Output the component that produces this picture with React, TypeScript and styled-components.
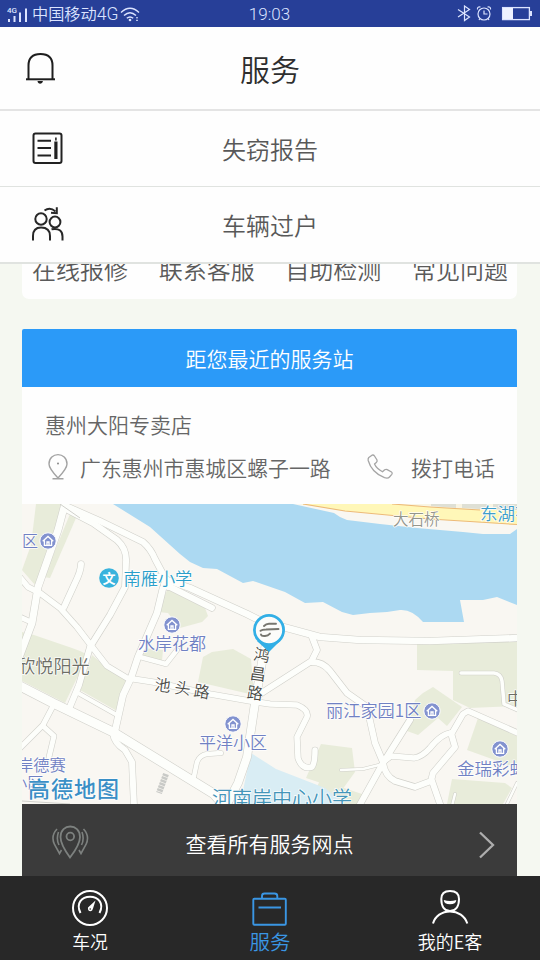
import React from "react";
import styled, { createGlobalStyle } from "styled-components";

const GlobalStyle = createGlobalStyle`
  * { box-sizing: border-box; }
  body {
    margin: 0;
    background: #f5f8f1;
    font-family: "Noto Sans CJK SC", sans-serif;
    font-weight: 350;
    color: #5a5a5a;
  }
  svg { display: block; flex: none; }
`;

const Screen = styled.div`
  width: 540px;
  height: 960px;
  display: flex;
  flex-direction: column;
  overflow: hidden;
  background: #f5f8f1;
`;

const StatusBar = styled.div`
  height: 27px;
  flex: none;
  display: grid;
  grid-template-columns: 1fr auto 1fr;
  align-items: center;
  padding: 0 8px 0 7px;
  background: #273f98;
  color: #dce4ff;
`;

const StatusGroup = styled.div<{ $end?: boolean }>`
  display: flex;
  align-items: center;
  gap: 2px;
  justify-content: ${(p) => (p.$end ? "flex-end" : "flex-start")};
`;

const StatusText = styled.span<{ $latin?: boolean }>`
  font-family: ${(p) => (p.$latin ? "Roboto, " : "")}"Noto Sans CJK SC", sans-serif;
  font-size: ${(p) => (p.$latin ? 17 : 16.2)}px;
  line-height: 27px;
  white-space: nowrap;
`;

const Latin = styled.span`
  font-family: Roboto, sans-serif;
  font-size: 17.5px;
`;

const Header = styled.header`
  height: 84px;
  flex: none;
  display: grid;
  grid-template-columns: 80px 1fr 80px;
  align-items: center;
  padding-bottom: 1px;
  background: #fefefe;
  border-bottom: 2px solid #e4e4e4;
`;

const BellSlot = styled.div`
  padding-left: 25px;
`;

const Title = styled.h1`
  margin: 0;
  font-size: 30px;
  font-weight: 350;
  line-height: 40px;
  text-align: center;
  color: #2e2e2e;
`;

const MenuRow = styled.div<{ $last?: boolean }>`
  height: ${(p) => (p.$last ? 77 : 76)}px;
  flex: none;
  display: grid;
  grid-template-columns: 80px 1fr 80px;
  align-items: center;
  background: #fefefe;
  border-bottom: ${(p) => (p.$last ? 2 : 1)}px solid #e0e3e0;
`;

const MenuIcon = styled.div`
  padding: 0 0 1px 30px;
`;

const MenuLabel = styled.div`
  font-size: 24px;
  line-height: 32px;
  text-align: center;
  color: #585858;
`;

const Content = styled.main`
  flex: 1;
  min-height: 0;
  padding: 0 23px 0 22px;
  display: flex;
  flex-direction: column;
`;

const QuickCard = styled.div`
  height: 35px;
  flex: none;
  display: flex;
  justify-content: space-between;
  align-items: flex-end;
  padding: 0 9px 12px 10px;
  margin-bottom: 30px;
  overflow: hidden;
  border-radius: 0 0 7px 7px;
  background: #fefefe;
`;

const QuickLabel = styled.span`
  font-size: 24px;
  line-height: 36px;
  white-space: nowrap;
`;

const StationHead = styled.div`
  height: 58px;
  flex: none;
  border-radius: 2px 2px 0 0;
  background: #2b9af8;
  color: #fff;
  font-size: 21px;
  line-height: 58px;
  text-align: center;
`;

const StationInfo = styled.div`
  height: 117px;
  flex: none;
  padding: 21px 22px 0 23px;
  background: #fefefe;
  font-size: 21px;
  line-height: 32px;
  color: #666;
`;

const ContactRow = styled.div`
  display: flex;
  align-items: center;
  margin-top: 11px;
`;

const Address = styled.span`
  flex: 1;
  padding-left: 9px;
  font-size: 20.9px;
  white-space: nowrap;
`;

const Call = styled.span`
  padding-left: 17px;
  white-space: nowrap;
`;

const AllStations = styled.div`
  flex: 1;
  display: grid;
  grid-template-columns: 80px 1fr 80px;
  align-items: center;
  justify-items: center;
  padding-top: 6px;
  background: #3b3b3b;
  color: #fff;
  font-size: 21px;
`;

const PinSlot = styled.div`
  justify-self: start;
  padding-left: 29px;
`;

const ChevronSlot = styled.div`
  justify-self: end;
  padding: 3px 21px 0 0;
`;

const TabBar = styled.nav`
  height: 84px;
  flex: none;
  display: grid;
  grid-template-columns: repeat(3, 180px);
  background: #282828;
`;

const Tab = styled.div<{ $active?: boolean }>`
  display: flex;
  flex-direction: column;
  align-items: center;
  padding-top: 13px;
  color: ${(p) => (p.$active ? "#3a96e4" : "#fff")};
`;

const TabLabel = styled.span<{ $size: number }>`
  font-size: ${(p) => p.$size}px;
  line-height: 26px;
  margin-top: 1px;
`;

const ROADS: { d: string; w: number }[] = [
  { d: "M312 637 L317 650 L311 662", w: 6 },
  { d: "M66 500 L58 530 L38 587 L32 623 L20 655", w: 7 },
  { d: "M66 506 L100 521 L143 542 Q151 549 155 559 L163 574 L168 587", w: 6 },
  { d: "M66 509 L93 523 L117 540 Q127 549 126 562 L125 587 L110 615 L90 647 L79 685 L69 709", w: 6 },
  { d: "M150 574 L190 588 L247 614 L263 622 L287 628 L320 637 L360 640 L430 641 L520 638", w: 6.5 },
  { d: "M164 584 L190 597 L212 608", w: 6 },
  { d: "M18 575 L28 587 L40 593 L60 608 L77 627 L93 648 L107 666 L127 678 L153 682 L210 694 L250 701 L270 704 L297 705 Q309 710 307 717 L297 737 L298 758 Q302 770 312 767 Q315 763 315 750", w: 5.5 },
  { d: "M81 564 Q81 571 75 583 L64 607", w: 6 },
  { d: "M163 588 L157 613 L138 657 L131 678 L123 695 L115 731", w: 6.5 },
  { d: "M140 657 L166 664 L177 650", w: 4.5 },
  { d: "M20 617 L31 622", w: 5 },
  { d: "M18 685 L53 703 L113 732 L170 767 L214 794 L226 808", w: 9 },
  { d: "M78 693 L117 715", w: 4 },
  { d: "M53 706 L43 725 L20 748", w: 5 },
  { d: "M43 726 L54 736 L49 757", w: 5 },
  { d: "M113 733 Q114 743 125 750 L132 762 L134 806", w: 6 },
  { d: "M267 640 L262 662 L255 703 L247 757 L238 783 L226 806", w: 8 },
  { d: "M193 781 L197 762 Q200 755 207 754 L221 753", w: 4.5 },
  { d: "M257 696 L310 662 Q322 661 330 671 L347 693 L367 707 L371 725 L375 743 L383 762", w: 6 },
  { d: "M410 720 L383 763 L358 808", w: 6 },
  { d: "M383 762 L391 756 L414 758 Q422 757 430 748 Q442 733 452 733 L463 714 L468 711 L520 734", w: 5.5 },
  { d: "M451 733 L455 747 L433 773 L431 781 L415 787 L395 781 Q385 776 383 763", w: 6 },
  { d: "M432 781 L440 804", w: 6 },
  { d: "M383 764 L363 769 L341 770", w: 2.5 },
  { d: "M461 673 L494 673 Q501 674 502 681 L504 704 L520 711", w: 3.5 },
  { d: "M517 783 L506 806", w: 2.5 },
  { d: "M455 794 L452 806", w: 2.5 },
];

const GREENS = [
  "36,504 62,504 46,562 35,585 22,570 31,545",
  "70,514 76,518 50,578 44,577",
  "168,588 205,608 208,616 202,622 180,628 168,613 158,612",
  "22,632 34,635 72,648 80,651 88,655 65,703 22,681",
  "92,655 107,668 129,681 117,711 80,690",
  "142,648 163,650 162,661 140,656",
  "203,657 212,652 233,649 251,659 254,695 198,682",
  "417,642 517,640 517,706 470,708 453,700 453,671 417,670",
  "423,693 433,687 462,707 447,726 438,718 418,735 407,731 415,700",
  "478,718 517,736 517,768 467,750",
  "321,744 352,748 355,772 342,790 306,778",
  "452,779 505,783 512,788 503,804 447,804",
  "320,780 362,794 359,804 310,804",
];

const MapHouse = ({ x, y }: { x: number; y: number }) => (
  <g transform={`translate(${x} ${y})`}>
    <circle r="8.2" fill="#8292cf" stroke="#fff" strokeWidth="1" />
    <path d="M-5.3 .3 L0 -4.6 L5.3 .3 M-3.6 -.6 V4.3 H3.6 V-.6 M-1 4.3 V1 H1 V4.3" fill="none" stroke="#fff" strokeWidth="1.3" />
  </g>
);

const MapText = styled.text<{ $tone: string; $weight?: number }>`
  font-family: "Noto Sans CJK SC", sans-serif;
  font-weight: ${(p) => p.$weight ?? 350};
  fill: ${(p) => p.$tone};
  stroke: #fffd;
  stroke-width: 1.6px;
  stroke-linejoin: round;
  paint-order: stroke;
`;

const BLUE = "#7081c3";

const StationMap = () => (
  <svg width="495" height="300" viewBox="22 504 495 300">
    <rect x="22" y="504" width="495" height="300" fill="#f9f7f2" />
    {GREENS.map((p) => (
      <polygon key={p} points={p} fill="#e8ecda" />
    ))}
    <path d="M113 504 L150 527 L180 554 L190 562 L203 568 L217 569 L243 583 L253 581 L285 592 L305 603 L323 602 L342 612 L353 615 L370 613 L387 612 L400 610 Q412 609 423 622 L464 622 L460 600 L483 600 L497 597 L517 605 V529 L510 534 L483 534 L463 532 L417 528 L380 524 L347 520 L340 517 L334 513 L293 504 Z" fill="#acd9f2" />
    <path d="M300 504 H517 V525 L430 519 L345 511 Z" fill="#fff7b8" />
    <path d="M395 504 L430 507 L517 511 V504 Z" fill="#f9f5e4" />
    <path d="M431 504 H456 V508 L431 506 Z M462 504 H487 V509.5 L462 508 Z M493 504 H517 V510 L493 509.5 Z" fill="#dfe0d5" />
    <path d="M303 504 L345 511 L430 519 L517 524.5 M392 504 L430 507 L480 510" fill="none" stroke="#edba79" strokeWidth="1.1" />
    <path d="M251 753 L276 769 L325 788 L345 804 H240 Z" fill="#d9edf4" />
    <g fill="none" strokeLinecap="round" strokeLinejoin="round">
      {ROADS.map((r) => (
        <path key={r.d} d={r.d} stroke="#d0d0ca" strokeWidth={r.w + 1.1} />
      ))}
      {ROADS.map((r) => (
        <path key={r.d} d={r.d} stroke="#fdfefb" strokeWidth={r.w} />
      ))}
    </g>
    <path d="M22 801 L70 804 M60 504 L80 518" stroke="#d0d0cb" fill="none" />
    <path d="M166 774 L159 793" stroke="#c9cac7" strokeWidth="6" strokeDasharray="2.5 .7" />

    <MapText $tone="#94968c" x="393" y="525" fontSize="15.5">大石桥</MapText>
    <MapText $tone="#3e9ecb" x="480" y="520" fontSize="17.5">东湖花园</MapText>
    <MapText $tone={BLUE} x="22" y="547" fontSize="16">区</MapText>
    <MapHouse x={48} y={541} />
    <circle cx="109" cy="578" r="9.8" fill="#39b3dd" />
    <text x="109" y="583" textAnchor="middle" fontSize="13" fontWeight="700" fill="#fff">文</text>
    <MapText $tone="#2a9fca" x="123.5" y="585" fontSize="17.2">南雁小学</MapText>
    <MapHouse x={172} y={625} />
    <MapText $tone={BLUE} x="138" y="650" fontSize="17">水岸花都</MapText>
    <MapText $tone="#6d6e66" x="17" y="673" fontSize="18.2">欣悦阳光</MapText>
    <g>
      <MapText $tone="#4a4b45" x="154" y="690" fontSize="16" transform="rotate(7 154 689)">池</MapText>
      <MapText $tone="#4a4b45" x="174" y="693" fontSize="16" transform="rotate(7 174 692)">头</MapText>
      <MapText $tone="#4a4b45" x="193" y="696" fontSize="16" transform="rotate(9 193 696)">路</MapText>
      <MapText $tone="#4a4b45" x="254" y="661" fontSize="16" transform="rotate(10 262 655)">鸿</MapText>
      <MapText $tone="#4a4b45" x="250" y="680" fontSize="16" transform="rotate(8 259 674)">昌</MapText>
      <MapText $tone="#4a4b45" x="247" y="699" fontSize="16" transform="rotate(8 255 693)">路</MapText>
    </g>
    <MapHouse x={233} y={724} />
    <MapText $tone={BLUE} x="199" y="749" fontSize="17">平洋小区</MapText>
    <MapText $tone={BLUE} x="326" y="717" fontSize="17.2">丽江家园1区</MapText>
    <MapHouse x={432} y={711} />
    <MapText $tone="#6d6e66" x="507" y="705" fontSize="17">中</MapText>
    <MapHouse x={500} y={749} />
    <MapText $tone={BLUE} x="457" y="775" fontSize="17.5">金瑞彩虹</MapText>
    <MapText $tone={BLUE} x="17" y="771" fontSize="16.3">岸德赛</MapText>
    <MapText $tone={BLUE} x="11" y="789" fontSize="16.3">小区</MapText>
    <MapText $tone="#4495b9" x="212" y="806" fontSize="20">河南岸中心小学</MapText>
    <MapText $tone="#3a8fc6" $weight={500} x="28" y="797" fontSize="22" textLength="91">高德地图</MapText>

    <path d="M257 641 L269 652 L280 641 Z" fill="#32afe6" />
    <circle cx="269" cy="630" r="14.6" fill="#fcfcfa" stroke="#32afe6" strokeWidth="2.8" />
    <path d="M264 626 Q266 623.8 269 623.8 H276 M260.5 630.8 Q262 629.5 266 629.5 L278.5 629 M261 634.5 Q261.5 636.3 265 636 Q268 635.8 270 633.6" fill="none" stroke="#77766f" strokeWidth="1.9" strokeLinecap="round" />
  </svg>
);

const SignalIcon = () => (
  <svg width="23" height="19" viewBox="0 0 23 19" fill="#dce4ff">
    <text x="0" y="8" fontSize="8" fontFamily="Roboto, sans-serif" fontWeight="500">4G</text>
    <path d="M1 14h2v3H1z M6.5 11h2v6h-2z M12 7.5h2V17h-2z M18 3.5h2V17h-2z" />
  </svg>
);

const WifiIcon = () => (
  <svg width="20" height="17" viewBox="0 0 20 17" fill="none" stroke="#dce4ff" strokeWidth="1.4">
    <path d="M1 6.5 Q10 -2 19 6.5 M4 9.5 Q10 3.8 16 9.5 M6.8 12.3 Q10 9.5 13.2 12.3" />
    <circle cx="10" cy="14" r="1.3" fill="#dce4ff" stroke="none" />
    <path d="M16 11.8h2M16 14.3h2" strokeWidth="1" />
  </svg>
);

const StatusIcons = () => (
  <svg width="76" height="18" viewBox="456 5 76 18" fill="none" stroke="#dce4ff" strokeWidth="1.2">
    <path d="M458 9.5 L469.5 17 L464.5 20.5 V6 L469.5 9.5 L458 17" />
    <circle cx="484" cy="14" r="6" />
    <path d="M484 10.5 V14 H487.5 M477.5 9.5 Q477 6.5 480.5 7 M490.5 9.5 Q491 6.5 487.5 7 M480 18.5 L479 20 M488 18.5 L489 20" />
    <rect x="502.6" y="7.6" width="26.8" height="12" strokeWidth="1.3" />
    <path d="M503 8h10v11h-10z" fill="#eef2ff" stroke="none" />
    <path d="M530 11h2v5h-2z" fill="#dce4ff" stroke="none" />
  </svg>
);

const BellIcon = () => (
  <svg width="31" height="34" viewBox="25 51 31 34" fill="none" stroke="#1e1e1e" strokeWidth="2">
    <path d="M28.5 79 V65.5 C28.5 57.5 33.5 54 40.5 54 S52.5 57.5 52.5 65.5 V79" />
    <path d="M26 79.3 H55" />
    <path d="M37.5 81 H43 Q42.5 83.8 40.2 83.8 T37.5 81Z" fill="#1e1e1e" stroke="none" />
  </svg>
);

const ReportIcon = () => (
  <svg width="34" height="34" viewBox="30 131 34 34" fill="none" stroke="#222" strokeWidth="2">
    <rect x="33.5" y="133.5" width="28" height="29.5" rx="2" />
    <path d="M37.5 140.8 H51 M37.5 148 H51 M37.5 155.5 H51" />
    <path d="M55.9 141.5 V159" strokeWidth="3.2" />
    <path d="M55.9 137.5 V140.5" strokeWidth="1.6" />
  </svg>
);

const TransferIcon = () => (
  <svg width="36" height="36" viewBox="30 206 36 36" fill="none" stroke="#272727" strokeWidth="2">
    <circle cx="41" cy="219" r="5.7" />
    <circle cx="55" cy="222" r="5.4" />
    <path d="M33 240.5 V236 C33 230 36 227.5 41 227.5 S50 230 50 236 V240.5 M51.5 229.3 C59 227.8 62.5 231 62.5 236.5 V240.5" />
    <path d="M44.5 210.5 Q50 206.5 55.5 211.5" />
    <path d="M56.8 207.2 V213.2 L51 212.7" />
  </svg>
);

const AddressPin = () => (
  <svg width="26" height="28" viewBox="45 453 26 28" fill="none" stroke="#a3a3a3" strokeWidth="1.4">
    <path d="M58 478 Q49 468.5 49 464 C49 451.5 67 451.5 67 464 Q67 468.5 58 478Z M52.5 478.7 H63.5" />
    <circle cx="58" cy="463.5" r="1" fill="#888" stroke="none" />
  </svg>
);

const PhoneIcon = () => (
  <svg width="28" height="28" viewBox="366 453 28 28" fill="none" stroke="#a5a5a5" strokeWidth="1.3" strokeLinejoin="round">
    <path d="M368.8 457.5 L372 455.2 Q373.5 454.5 374.5 456 L377 460 Q377.5 461.5 376.3 462.5 L374.5 464 Q376.5 468.5 382.5 471.8 L384.7 469.8 Q386 469 387.2 469.6 L391.5 472 Q392.8 473 391.8 474.3 L389.5 477 Q388 478.8 384.5 477.7 Q371.5 472.5 368.2 460.5 Q367.8 458.5 368.8 457.5Z" />
  </svg>
);

const StationsIcon = () => (
  <svg width="38" height="38" viewBox="51 825 38 38" fill="none" stroke="#7d817f" strokeWidth="1.8">
    <path d="M70 858.5 Q60.5 845.5 60.5 838 C60.5 824 80 824 80 838 Q80 845.5 70 858.5Z" />
    <circle cx="70.3" cy="837.5" r="3.8" />
    <path d="M57 830 Q50.5 837 54.5 845.5 L59.5 854.5 L61.5 851 M58.5 833 Q56 840 59 846 M83.5 830 Q90 837 86 845.5 L81 854.5 L79 851 M82 833 Q84.5 840 81.5 846" strokeWidth="1.6" />
  </svg>
);

const Chevron = () => (
  <svg width="18" height="30" viewBox="0 0 18 30" fill="none" stroke="#adadad" strokeWidth="2.3">
    <path d="M2 2.5 L15 15 L2 27.5" />
  </svg>
);

const GaugeIcon = () => (
  <svg width="38" height="38" viewBox="0 0 38 38" fill="none" stroke="#fff" strokeWidth="2">
    <circle cx="19" cy="19" r="17" />
    <path d="M9.5 24 C4.5 14 11 7.8 19 7.8 S33.5 14 28.5 24" />
    <path d="M24.5 11.5 L17 18.5 Q16.5 22 19.5 22.3 Q21.5 22 22 19.5Z" fill="#fff" stroke="none" />
    <circle cx="19.2" cy="20" r=".8" fill="#282828" stroke="none" />
  </svg>
);

const CaseIcon = () => (
  <svg width="38" height="38" viewBox="0 0 38 38" fill="none" stroke="#3a96e4" strokeWidth="1.9">
    <rect x="2.3" y="9.8" width="32.5" height="26" rx="1" />
    <path d="M11 9.5 V7 Q11 4.5 13.5 4.5 H23.5 Q26.3 4.5 26.3 7 V9.5 M7.5 18.5 H30" />
  </svg>
);

const RiderIcon = () => (
  <svg width="38" height="38" viewBox="0 0 38 38" fill="none" stroke="#fff" strokeWidth="2">
    <path d="M10.3 10 C10.3 4.3 14 2 19 2 S28 4.3 28 10 C28 17.5 24.5 22 19 22 S10.3 17.5 10.3 10Z" />
    <path d="M12.8 11 Q19 12.8 25.3 11 Q25 15.3 19 15.3 T12.8 11Z" fill="#fff" stroke="none" />
    <path d="M2 34.5 C4 27 11 22.4 19 22.4 S34 27 36.3 34.5" />
  </svg>
);

const QUICK_ACTIONS = ["在线报修", "联系客服", "自助检测", "常见问题"];

export default function App() {
  return (
    <Screen>
      <GlobalStyle />
      <StatusBar>
        <StatusGroup>
          <SignalIcon />
          <StatusText>中国移动<Latin>4G</Latin></StatusText>
          <WifiIcon />
        </StatusGroup>
        <StatusText $latin>19:03</StatusText>
        <StatusGroup $end>
          <StatusIcons />
        </StatusGroup>
      </StatusBar>

      <Header>
        <BellSlot><BellIcon /></BellSlot>
        <Title>服务</Title>
      </Header>
      <MenuRow>
        <MenuIcon><ReportIcon /></MenuIcon>
        <MenuLabel>失窃报告</MenuLabel>
      </MenuRow>
      <MenuRow $last>
        <MenuIcon><TransferIcon /></MenuIcon>
        <MenuLabel>车辆过户</MenuLabel>
      </MenuRow>

      <Content>
        <QuickCard>
          {QUICK_ACTIONS.map((label) => (
            <QuickLabel key={label}>{label}</QuickLabel>
          ))}
        </QuickCard>
        <StationHead>距您最近的服务站</StationHead>
        <StationInfo>
          <div>惠州大阳专卖店</div>
          <ContactRow>
            <AddressPin />
            <Address>广东惠州市惠城区螺子一路</Address>
            <PhoneIcon />
            <Call>拨打电话</Call>
          </ContactRow>
        </StationInfo>
        <StationMap />
        <AllStations>
          <PinSlot><StationsIcon /></PinSlot>
          <span>查看所有服务网点</span>
          <ChevronSlot><Chevron /></ChevronSlot>
        </AllStations>
      </Content>

      <TabBar>
        <Tab>
          <GaugeIcon />
          <TabLabel $size={17.8}>车况</TabLabel>
        </Tab>
        <Tab $active>
          <CaseIcon />
          <TabLabel $size={20.5}>服务</TabLabel>
        </Tab>
        <Tab>
          <RiderIcon />
          <TabLabel $size={18}>我的E客</TabLabel>
        </Tab>
      </TabBar>
    </Screen>
  );
}
